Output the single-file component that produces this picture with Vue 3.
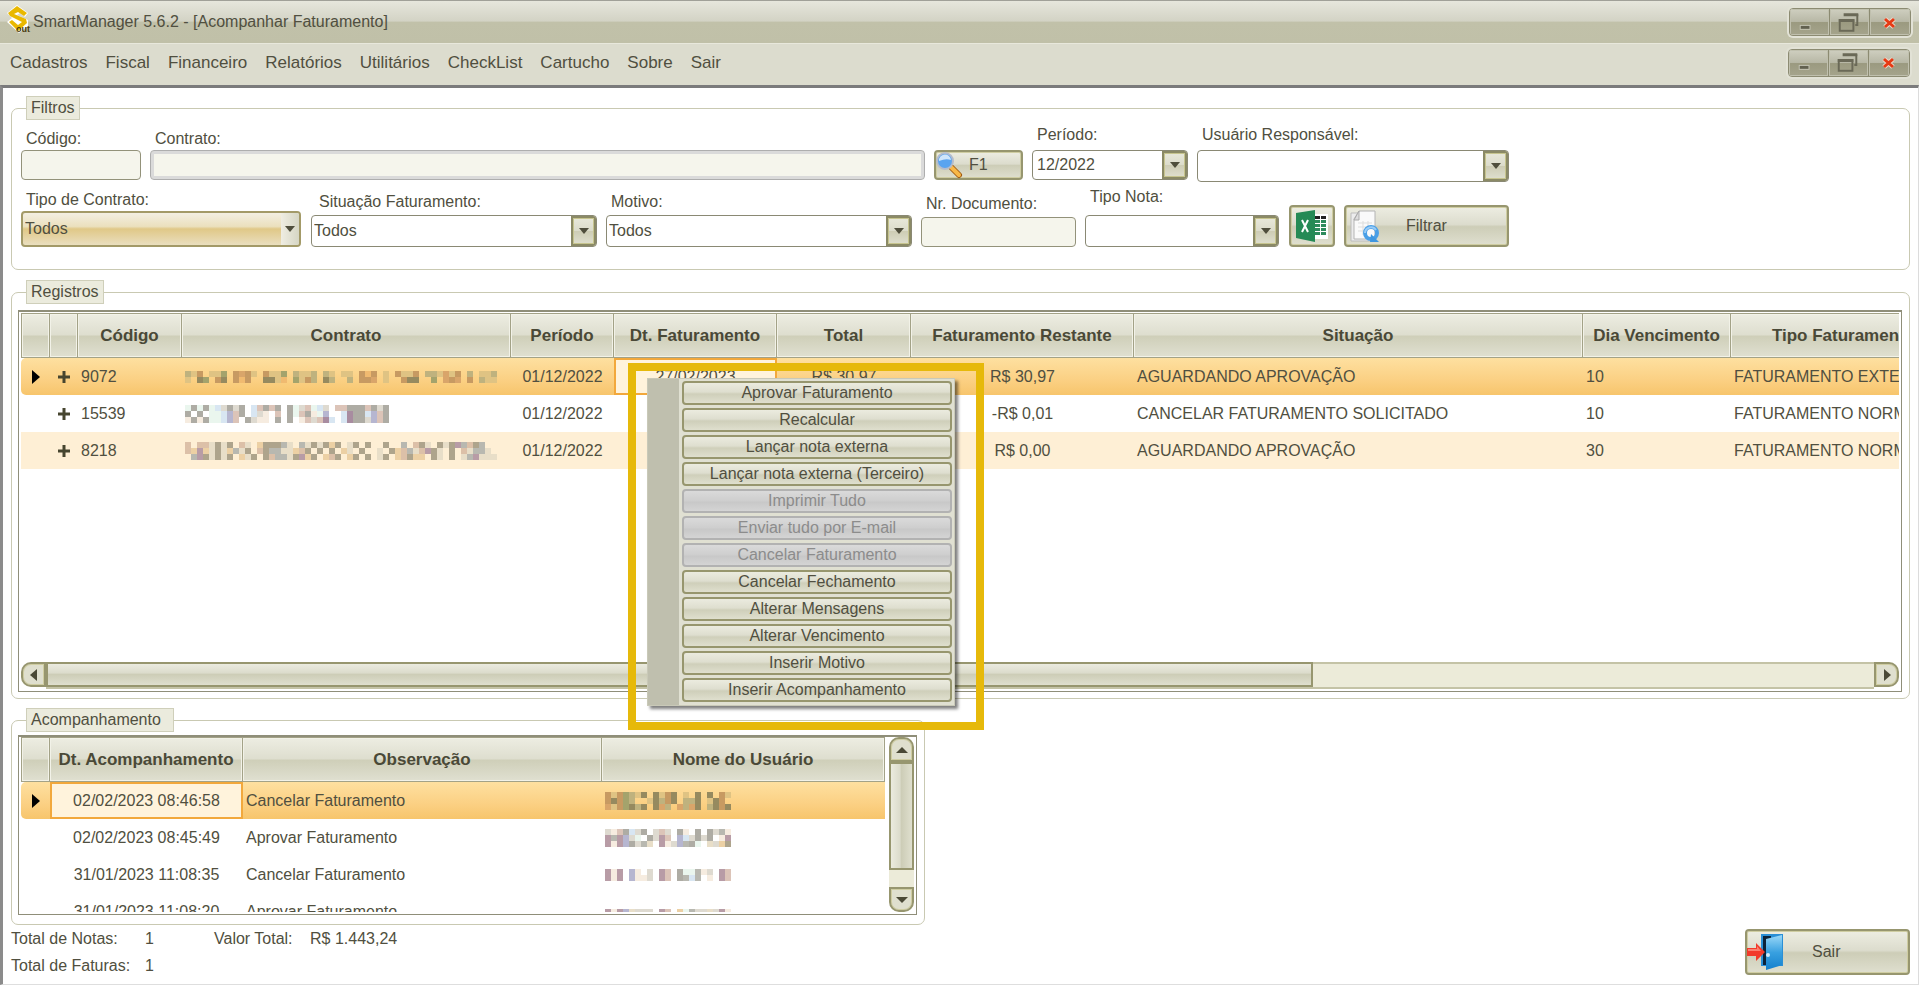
<script setup>
import { h } from 'vue'

const menus = ['Cadastros', 'Fiscal', 'Financeiro', 'Relatórios', 'Utilitários', 'CheckList', 'Cartucho', 'Sobre', 'Sair']

const palette = {
  a: '#bfb27e', b: '#c79a62', c: '#968a5f', d: '#dfc383', e: '#f0ba70', f: '#a4a36c', g: '#d9a56a',
  h: '#aeaca4', i: '#d8e6f2', j: '#eaf6ee', k: '#b6b6d0', l: '#dcc4b8', m: '#f6ece0', n: '#a88ca0', o: '#dedad0',
  p: '#aea48c', q: '#ecd0a4', r: '#dcc0a8', s: '#e8dec8', t: '#b89ca6', u: '#b8b8b0'
}

// Censored values, drawn as rows of coloured 6px blocks.
const Mosaic = (props) => {
  const rows = props.rows
  const w = rows[0].length * 6
  const ht = rows.length * 6
  const cells = []
  rows.forEach((line, y) => {
    line.split('').forEach((c, x) => {
      if (palette[c]) cells.push(h('rect', { x: x * 6, y: y * 6, width: 6, height: 6, fill: palette[c] }))
    })
  })
  return h('svg', { width: w, height: ht, viewBox: `0 0 ${w} ${ht}`, 'shape-rendering': 'crispEdges', 'aria-hidden': 'true' }, cells)
}
Mosaic.props = ['rows']

const WindowButtons = () => h('div', { class: 'winbtns' }, [
  h('button', { type: 'button', 'aria-label': 'Minimizar' }, [
    h('svg', { width: 40, height: 25, viewBox: '0 0 40 25' }, [
      h('rect', { x: 10, y: 15, width: 11, height: 5, fill: '#c4c4b4' }),
      h('rect', { x: 11, y: 16, width: 9, height: 3, fill: '#626150' })
    ])
  ]),
  h('button', { type: 'button', 'aria-label': 'Restaurar' }, [
    h('svg', { width: 40, height: 25, viewBox: '0 0 40 25', fill: 'none', stroke: '#6a6957' }, [
      h('path', { d: 'M28 4v11h-2', 'stroke-width': 2 }),
      h('path', { d: 'M14 4.500h15', 'stroke-width': 3 }),
      h('rect', { x: 10, y: 10, width: 14, height: 11, 'stroke-width': 2 }),
      h('path', { d: 'M9 10.500h16', 'stroke-width': 3 })
    ])
  ]),
  h('button', { type: 'button', 'aria-label': 'Fechar' }, [
    h('svg', { width: 40, height: 25, viewBox: '0 0 40 25' }, [
      h('path', { d: 'M15 9l9 8M24 9l-9 8', stroke: '#e8d4c6', 'stroke-width': 5 }),
      h('path', { d: 'M15 9l9 8M24 9l-9 8', stroke: '#e63a14', 'stroke-width': 3 })
    ])
  ])
])

const columns = [
  { t: '', w: 29 }, { t: '', w: 28 }, { t: 'Código', w: 104 }, { t: 'Contrato', w: 329 },
  { t: 'Período', w: 103 }, { t: 'Dt. Faturamento', w: 163 }, { t: 'Total', w: 134 },
  { t: 'Faturamento Restante', w: 223 }, { t: 'Situação', w: 449 }, { t: 'Dia Vencimento', w: 148 },
  { t: 'Tipo Faturamento', w: 226 }
]
const records = [
  {
    code: '9072', period: '01/12/2022', date: '27/02/2023', total: 'R$ 30,97', rest: 'R$ 30,97',
    status: 'AGUARDANDO APROVAÇÃO', day: '10', type: 'FATURAMENTO EXTERNO',
    mosaic: [
      'adb.ddf.bgbd.bddf.adda.ad.dd.beb.d.bddb.aadgdb.a.dda',
      'd.cf.bc.beb..ccde.fdba.ca..a.bbg.d..bcc..f.gbg.b.add'
    ]
  },
  {
    code: '15539', period: '01/12/2022', date: '', total: '', rest: '-R$ 0,01',
    status: 'CANCELAR FATURAMENTO SOLICITADO', day: '10', type: 'FATURAMENTO NORMAL',
    mosaic: [
      'jhjhjiohoh.ilhlh.hjoljio.llhhhlhoh',
      'h.h.jjiklh.iom.l.hjlhmjk..inhhiklh',
      'mhmhjjikl.homm.h.h.mlolni.inhhoklh'
    ]
  },
  {
    code: '8218', period: '01/12/2022', date: '', total: '', rest: 'R$ 0,00',
    status: 'AGUARDANDO APROVAÇÃO', day: '30', type: 'FATURAMENTO NORMAL',
    mosaic: [
      'r.rrspsp.rs.qpppus.uspspqp.sp.p..p..u.rps.pspturpu..',
      'rqtqspsqusp.rpuussqrp.p.p.qs.p..s.pqrusrtps.p.rsuus.',
      '.utpspsp.qsp.pruusptqp.qrp.qp.p.sp.qrpqq.ps.p.sutsss'
    ]
  }
]

const history = [
  { date: '02/02/2023 08:46:58', note: 'Cancelar Faturamento', mosaic: ['bdbfadc.cdbc.d.c.c.bd', 'bcbfa..dcabc.aac.dcb.', 'gdbfcac.cga.gagc.acbc'] },
  { date: '02/02/2023 08:45:49', note: 'Aprovar Faturamento', mosaic: ['omlhioh.olo.hm.h.houm', 'tutkoj.hotl.kiohoh.mt', 'tmtkhous.tmokuhj.soqp'] },
  { date: '31/01/2023 11:08:35', note: 'Cancelar Faturamento', mosaic: ['tmt.km.o.tl.hjjumo.tl', 'tmt.kmmo.tl.huiu.m.tl'] },
  { date: '31/01/2023 11:08:20', note: 'Aprovar Faturamento', mosaic: ['tmtksooo.tl.qjuoosotm'] }
]

const actions = [
  { t: 'Aprovar Faturamento' }, { t: 'Recalcular' }, { t: 'Lançar nota externa' }, { t: 'Lançar nota externa (Terceiro)' },
  { t: 'Imprimir Tudo', off: true }, { t: 'Enviar tudo por E-mail', off: true }, { t: 'Cancelar Faturamento', off: true },
  { t: 'Cancelar Fechamento' }, { t: 'Alterar Mensagens' }, { t: 'Alterar Vencimento' }, { t: 'Inserir Motivo' },
  { t: 'Inserir Acompanhamento' }
]
</script>

<template>
  <div class="app">
    <header class="titlebar">
      <svg class="logo" width="24" height="28" viewBox="0 0 24 28" aria-hidden="true">
        <path d="M0 8L10 0l11 8-3 4-5-4-3 2 11 5v6l-9 7L0 17l5-4z" fill="#fff" />
        <path d="M1 8l9-7 10 7-3 3-6-4-4 2 12 5 1 4-9 8-9-9 3-2 6 5 4-3L3 11z" fill="#e9b800" />
        <text x="9" y="27" class="logo-text">out</text>
      </svg>
      <span class="title">SmartManager 5.6.2 - [Acompanhar Faturamento]</span>
      <WindowButtons />
    </header>
    <nav class="menubar">
      <a v-for="m in menus" :key="m" href="#">{{ m }}</a>
      <WindowButtons />
    </nav>

    <main class="content">
      <fieldset class="group filters">
        <legend class="caption">Filtros</legend>
        <div class="row first">
          <div class="field code low">
            <label for="codigo">Código:</label>
            <input id="codigo" type="text">
          </div>
          <div class="field contract low">
            <label for="contrato">Contrato:</label>
            <input id="contrato" class="thick" type="text" disabled>
          </div>
          <button type="button" class="btn find">
            <svg width="28" height="28" viewBox="0 0 28 28" aria-hidden="true">
              <path d="M15 16l8 8" stroke="#a05a10" stroke-width="6" stroke-linecap="round" />
              <path d="M15 16l8 8" stroke="#f8b848" stroke-width="4" stroke-linecap="round" />
              <circle cx="9" cy="10" r="8" fill="#5aa4f0" stroke="#b4bccc" stroke-width="2" />
              <path d="M3 10a6 6 0 0 1 12-1q-5-2-12 1z" fill="#cfe6fb" />
            </svg>
            <span>F1</span>
          </button>
          <div class="field period">
            <label for="periodo">Período:</label>
            <span class="combo short"><select id="periodo"><option>12/2022</option></select><i class="arrow"></i></span>
          </div>
          <div class="field user">
            <label for="usuario">Usuário Responsável:</label>
            <span class="combo"><select id="usuario"><option></option></select><i class="arrow"></i></span>
          </div>
        </div>
        <div class="row second">
          <div class="field kind">
            <label for="tipo">Tipo de Contrato:</label>
            <span class="combo hot"><select id="tipo"><option>Todos</option></select><i class="arrow"></i></span>
          </div>
          <div class="field status">
            <label for="situacao">Situação Faturamento:</label>
            <span class="combo"><select id="situacao"><option>Todos</option></select><i class="arrow"></i></span>
          </div>
          <div class="field reason">
            <label for="motivo">Motivo:</label>
            <span class="combo"><select id="motivo"><option>Todos</option></select><i class="arrow"></i></span>
          </div>
          <div class="field doc">
            <label for="documento">Nr. Documento:</label>
            <input id="documento" type="text">
          </div>
          <div class="field note">
            <label for="nota">Tipo Nota:</label>
            <span class="combo"><select id="nota"><option></option></select><i class="arrow"></i></span>
          </div>
          <button type="button" class="btn excel" aria-label="Exportar para Excel">
            <svg width="34" height="34" viewBox="0 0 34 34" aria-hidden="true">
              <rect x="15" y="5" width="18" height="25" fill="#fff" />
              <g fill="#222"><rect x="20" y="7" width="5" height="3" /><rect x="26" y="7" width="5" height="3" /></g>
              <g fill="#2e8b5c">
                <rect x="20" y="11" width="5" height="3" /><rect x="26" y="11" width="5" height="3" />
                <rect x="20" y="15" width="5" height="3" /><rect x="26" y="15" width="5" height="3" />
                <rect x="20" y="19" width="5" height="3" /><rect x="26" y="19" width="5" height="3" />
                <rect x="20" y="23" width="5" height="3" /><rect x="26" y="23" width="5" height="3" />
              </g>
              <path d="M1 4L20 1v32L1 29z" fill="#258a55" />
              <path d="M7 11l6 12M13 11L7 23" stroke="#fff" stroke-width="2" fill="none" />
            </svg>
          </button>
          <button type="button" class="btn filter">
            <svg width="32" height="34" viewBox="0 0 32 34" aria-hidden="true">
              <path d="M2 4h20v28H2z" fill="#ececec" stroke="#bcbcbc" />
              <path d="M10 2h16v28H5V10z" fill="#fafafa" stroke="#b4b4b4" />
              <path d="M10 2v9H5z" fill="#ddd" stroke="#aaa" />
              <path d="M9 14h14M9 18h14M9 22h9M14 12v14M19 12v8" stroke="#ddd" />
              <circle cx="22" cy="24" r="6" fill="none" stroke="#4a9fe6" stroke-width="4" />
              <path d="M22 25l8 8h-9z" fill="#3f97e0" />
              <path d="M16 24a6 6 0 0 1 11-3" fill="none" stroke="#9accf6" stroke-width="2" />
            </svg>
            <span>Filtrar</span>
          </button>
        </div>
      </fieldset>

      <section class="group records">
        <h2 class="caption">Registros</h2>
        <div class="grid">
          <div class="scroller">
            <table class="wide">
              <colgroup><col v-for="(c, i) in columns" :key="i" :style="{ width: c.w + 'px' }"></colgroup>
              <thead>
                <tr><th v-for="(c, i) in columns" :key="i" scope="col">{{ c.t }}</th></tr>
              </thead>
              <tbody>
                <tr v-for="(r, i) in records" :key="i" :class="{ selected: i === 0, alt: i === 2 }">
                  <td class="mid"><svg v-if="i === 0" class="mark" width="8" height="14" viewBox="0 0 8 14" aria-hidden="true"><path d="M0 0l8 7-8 7z" /></svg></td>
                  <td class="mid"><svg class="plus" width="12" height="12" viewBox="0 0 12 12" aria-hidden="true"><path d="M6 0v12M0 6h12" stroke="#46452f" stroke-width="3" /></svg></td>
                  <td>{{ r.code }}</td>
                  <td><Mosaic :rows="r.mosaic" /></td>
                  <td class="mid">{{ r.period }}</td>
                  <td class="mid" :class="{ focus: i === 0 }">{{ r.date }}</td>
                  <td class="mid">{{ r.total }}</td>
                  <td class="mid">{{ r.rest }}</td>
                  <td>{{ r.status }}</td>
                  <td>{{ r.day }}</td>
                  <td>{{ r.type }}</td>
                </tr>
              </tbody>
            </table>
          </div>
          <div class="hbar">
            <button type="button" class="end left" aria-label="Rolar para a esquerda"><svg width="8" height="12" viewBox="0 0 8 12"><path d="M7 0v12L0 6z" /></svg></button>
            <div class="track"><div class="thumb"></div></div>
            <button type="button" class="end right" aria-label="Rolar para a direita"><svg width="8" height="12" viewBox="0 0 8 12"><path d="M1 0v12l7-6z" /></svg></button>
          </div>
        </div>
      </section>

      <section class="group tracking">
        <h2 class="caption roomy">Acompanhamento</h2>
        <div class="grid side">
          <div class="scroller">
            <table class="narrow">
              <colgroup><col class="c0"><col class="c1"><col class="c2"><col class="c3"></colgroup>
              <thead>
                <tr><th scope="col"></th><th scope="col">Dt. Acompanhamento</th><th scope="col">Observação</th><th scope="col">Nome do Usuário</th></tr>
              </thead>
              <tbody>
                <tr v-for="(r, i) in history" :key="i" :class="{ selected: i === 0 }">
                  <td class="mid"><svg v-if="i === 0" class="mark" width="8" height="14" viewBox="0 0 8 14" aria-hidden="true"><path d="M0 0l8 7-8 7z" /></svg></td>
                  <td class="mid" :class="{ focus: i === 0 }">{{ r.date }}</td>
                  <td>{{ r.note }}</td>
                  <td><Mosaic :rows="r.mosaic" /></td>
                </tr>
              </tbody>
            </table>
          </div>
          <div class="vbar">
            <button type="button" class="end up" aria-label="Rolar para cima"><svg width="12" height="8" viewBox="0 0 12 8"><path d="M0 7h12L6 1z" /></svg></button>
            <div class="track"><div class="thumb"></div></div>
            <button type="button" class="end down" aria-label="Rolar para baixo"><svg width="12" height="8" viewBox="0 0 12 8"><path d="M0 1h12L6 7z" /></svg></button>
          </div>
        </div>
      </section>

      <footer class="footer">
        <div class="totals">
          <span>Total de Notas:</span><span>1</span><span>Valor Total:</span><span>R$ 1.443,24</span>
          <span>Total de Faturas:</span><span>1</span>
        </div>
        <button type="button" class="btn exit">
          <svg width="38" height="38" viewBox="0 0 38 38" aria-hidden="true">
            <defs>
              <linearGradient id="door" x1="0" y1="0" x2="0" y2="1"><stop offset="0" stop-color="#9ad8f8" /><stop offset=".5" stop-color="#38a0e0" /><stop offset="1" stop-color="#1480cc" /></linearGradient>
            </defs>
            <path d="M14 1h22v32H14z" fill="#2a8fd6" />
            <path d="M16 3h8v29h-8z" fill="#0c2238" />
            <path d="M19 6l16-4v30l-16 5z" fill="url(#door)" />
            <path d="M0 15h9v-5l9 9-9 9v-5H0z" fill="#f23a2a" />
            <path d="M1 16h9v-3l4 5H1z" fill="#fa8070" />
            <circle cx="21" cy="22" r="2" fill="#cfeafa" />
          </svg>
          <span>Sair</span>
        </button>
      </footer>
    </main>

    <div class="popup">
      <div class="gutter"></div>
      <div class="actions">
        <button v-for="(a, i) in actions" :key="i" type="button" :disabled="a.off">{{ a.t }}</button>
      </div>
    </div>
    <div class="highlight"></div>
  </div>
</template>

<style>
body {
  background: #fff;
}
.winbtns {
  display: flex;
  margin-left: auto;
  height: 28px;
  box-sizing: border-box;
  border: 1px solid #8c8b72;
  border-radius: 4px;
  overflow: hidden;
  box-shadow: 0 0 0 2px #e2e2d6;
}
.winbtns button {
  display: flex;
  align-items: center;
  justify-content: center;
  width: 40px;
  padding: 0;
  border: 0;
  border-right: 1px solid #8c8b72;
  background: linear-gradient(#cfcfc0, #b8b8a6 48%, #9b9a80 52%, #a5a48c);
  box-shadow: inset 0 0 0 1px #c0c0ae;
}
.winbtns button:last-child {
  border-right: 0;
}
</style>

<style scoped>
.app {
  position: relative;
  display: flex;
  flex-direction: column;
  min-height: 100vh;
  box-sizing: border-box;
  padding-bottom: 1px;
  font: 16px/20px "Liberation Sans", Arial, sans-serif;
  color: #504f40;
  background: #fff;
}
button, input, select {
  font: inherit;
  color: inherit;
  box-sizing: border-box;
}
.titlebar {
  display: flex;
  align-items: center;
  height: 43px;
  box-sizing: border-box;
  border-top: 1px solid #a0a098;
  padding: 0 8px 0 7px;
  background: linear-gradient(#e6e6dc, #d3d3c5 48%, #c1c1a9 50%, #c0c0a8);
}
.logo {
  margin-right: 2px;
  margin-bottom: 6px;
}
.logo-text {
  font: bold 9px "Liberation Sans", sans-serif;
  fill: #4a3c10;
}
.title {
  font-size: 16px;
}
.menubar {
  display: flex;
  align-items: center;
  gap: 18px;
  height: 42px;
  box-sizing: border-box;
  border-top: 1px solid #e8e8dc;
  padding: 0 9px 4px 10px;
  background: #dcdcce;
  font-size: 17px;
}
.menubar a {
  color: inherit;
  text-decoration: none;
}
.content {
  flex: 1;
  display: flex;
  flex-direction: column;
  border-top: 3px solid #7b7b7c;
  border-left: 3px solid #8b8b8b;
  border-right: 1px solid #dcdcdc;
  border-bottom: 1px solid #dedede;
  padding: 8px 8px 1px 8px;
}
.group {
  min-width: 0;
  margin: 0;
  box-sizing: border-box;
  border: 1px solid #c9c9b2;
  border-radius: 7px;
}
.filters {
  padding: 5px 8px 22px 9px;
}
.caption {
  margin: 0;
  padding: 1px 4px;
  border: 1px solid #cfcfba;
  background: #ebebdd;
  font-size: 16px;
  font-weight: normal;
}
legend.caption {
  margin-left: 5px;
}
h2.caption {
  align-self: flex-start;
  margin: -13px 0 6px 8px;
}
h2.roomy {
  margin-bottom: 3px;
  padding-right: 12px;
}
.row {
  display: flex;
}
.first {
  align-items: flex-start;
  margin-bottom: 5px;
}
.second {
  align-items: flex-end;
}
.field {
  display: flex;
  flex-direction: column;
  gap: 3px;
  margin-right: 9px;
}
.first .field {
  gap: 5px;
}
.first .low {
  padding-top: 4px;
  gap: 1px;
}
.field label {
  padding-left: 5px;
}
.status label {
  padding-left: 8px;
}
.code { width: 120px; }
.contract { width: 775px; }
.period { width: 156px; }
.user { width: 312px; }
.field.kind { width: 280px; gap: 1px; margin-right: 10px; }
.status { width: 286px; }
.reason { width: 306px; }
.doc { width: 155px; }
.field.note { width: 194px; gap: 8px; margin-right: 10px; }
input {
  height: 30px;
  width: 100%;
  border: 1px solid #93927a;
  border-radius: 4px;
  background: #f5f5ec;
}
.thick {
  border-color: #aeaeae;
  box-shadow: inset 0 0 0 3px #dadada;
}
.combo {
  display: grid;
  grid-template-columns: 1fr 25px;
  height: 32px;
  box-sizing: border-box;
  border: 1px solid #8a8974;
  border-radius: 4px;
  overflow: hidden;
  background: #fff;
}
.short {
  height: 30px;
}
.combo select {
  grid-area: 1 / 1 / 2 / 3;
  appearance: none;
  width: 100%;
  padding: 0 28px 0 2px;
  border: 0;
  background: transparent;
}
.short select {
  padding-left: 4px;
}
.arrow {
  grid-area: 1 / 2 / 2 / 3;
  display: flex;
  align-items: center;
  justify-content: center;
  pointer-events: none;
  border: 2px solid #8b8a66;
  box-shadow: inset 0 0 0 1px #c6c48e;
  background: linear-gradient(#e8e8da, #dcdccb 48%, #cdccb4 50%, #dfdfce);
}
.arrow::after {
  content: "";
  border: 5px solid transparent;
  border-top: 6px solid #4f4e3c;
  border-bottom: 0;
}
.hot {
  grid-template-columns: 1fr 18px;
  height: 36px;
  border: 2px solid #a39a68;
  background: linear-gradient(#f3efe2, #ebe0bd 42%, #e0c887 50%, #eadfbf);
}
.hot .arrow {
  border: 0;
  box-shadow: none;
  background: linear-gradient(90deg, #efede2, #d6d6c4);
}
.btn {
  display: flex;
  align-items: center;
  padding: 0;
  border: 2px solid #97966f;
  border-radius: 4px;
  box-shadow: inset 0 0 0 1px #cfcda2;
  background: linear-gradient(#edede2, #dcdccd 46%, #cdcdb7 52%, #dfdfcf);
}
.find {
  width: 89px;
  height: 30px;
  margin: 25px 9px 0 0;
  gap: 5px;
}
.excel {
  width: 46px;
  height: 42px;
  justify-content: center;
  margin-right: 9px;
}
.filter {
  width: 165px;
  height: 42px;
  padding-left: 3px;
  gap: 25px;
}
.records {
  flex: 1;
  display: flex;
  flex-direction: column;
  margin-top: 22px;
  padding: 0 7px 6px 6px;
}
.grid {
  flex: 1;
  display: flex;
  flex-direction: column;
  min-width: 0;
  box-sizing: border-box;
  border: 1px solid #8f8e79;
  border-top-width: 2px;
  padding: 1px 2px 2px 2px;
}
.side {
  flex: none;
  flex-direction: row;
  height: 180px;
  gap: 4px;
  padding: 0 2px 2px;
}
.scroller {
  flex: 1;
  overflow: hidden;
}
table {
  table-layout: fixed;
  border-collapse: separate;
  border-spacing: 0;
}
.wide { width: 1936px; }
.narrow { width: 100%; }
.c0 { width: 29px; }
.c1 { width: 193px; }
.c2 { width: 359px; }
th {
  height: 45px;
  box-sizing: border-box;
  padding: 0;
  border: 1px solid #a3a287;
  border-left-width: 0;
  font-size: 17px;
  font-weight: bold;
  white-space: nowrap;
  color: #4a4937;
  box-shadow: inset 0 0 0 1px #f2f2e8;
  background: linear-gradient(#edede2, #dedecf 48%, #cfcfb9 52%, #e0e0d1);
}
th:first-child {
  border-left-width: 1px;
}
td {
  height: 37px;
  padding: 0 3px;
  box-sizing: border-box;
  white-space: nowrap;
  overflow: hidden;
}
td svg {
  display: block;
}
.mid {
  text-align: center;
}
.mark, .plus {
  margin: 0 auto;
}
.selected td {
  background: linear-gradient(#fee0a0, #fbd083 60%, #f7c56c);
}
.selected td:first-child {
  border-radius: 5px 0 0 5px;
}
.selected td.focus {
  border: 2px solid #f2a83c;
  background: #fff3dc;
}
.alt td {
  background: #feefd5;
}
.hbar, .vbar {
  display: flex;
}
.vbar {
  flex-direction: column;
}
.end {
  display: flex;
  align-items: center;
  justify-content: center;
  flex: none;
  width: 25px;
  height: 25px;
  padding: 0;
  border: 2px solid #97966f;
  box-shadow: inset 0 0 0 1px #cfcda2;
  background: #dfdfce;
  fill: #4a4936;
}
.left { border-radius: 10px 0 0 10px; }
.right { border-radius: 0 10px 10px 0; }
.up { border-radius: 10px 10px 0 0; }
.down { border-radius: 0 0 10px 10px; }
.track {
  flex: 1;
  box-sizing: border-box;
  background: #ecebd9;
}
.hbar .track {
  border-top: 2px solid #c4c3a6;
  border-bottom: 2px solid #c4c3a6;
}
.thumb {
  box-sizing: border-box;
  border: 2px solid #97966f;
}
.hbar .thumb {
  width: 69.3%;
  height: 25px;
  margin-top: -2px;
  background: linear-gradient(#ebebdf, #dcdccc 42%, #cdcdb7 50%, #dfdfce);
}
.vbar .thumb {
  height: 108px;
  background: linear-gradient(90deg, #ebebdf, #dcdccc 42%, #cdcdb7 50%, #dfdfce);
}
.tracking {
  display: flex;
  flex-direction: column;
  width: 914px;
  margin: 21px 0 4px;
  padding: 0 7px 9px 6px;
}
.footer {
  display: flex;
  align-items: flex-start;
  justify-content: space-between;
}
.totals {
  display: grid;
  grid-template-columns: 134px 69px 96px 120px;
  grid-auto-rows: 27px;
}
.exit {
  width: 165px;
  height: 46px;
  gap: 27px;
}
.popup {
  position: absolute;
  left: 647px;
  top: 378px;
  display: flex;
  width: 308px;
  box-sizing: border-box;
  border: 1px solid #c9c9b8;
  background: #e0e0d2;
  box-shadow: 3px 3px 3px rgba(0, 0, 0, .5);
}
.gutter {
  width: 31px;
  background: #bfbfae;
}
.actions {
  flex: 1;
  display: flex;
  flex-direction: column;
  gap: 3px;
  padding: 2px 2px 3px 3px;
}
.actions button {
  height: 24px;
  padding: 0;
  border: 2px solid #97966e;
  border-radius: 4px;
  line-height: 18px;
  background: linear-gradient(#ebebdf, #dedecf 45%, #cfcfba 55%, #dfdfce);
}
.actions button:disabled {
  border-color: #b2b2b2;
  color: #8c8c8c;
  background: linear-gradient(#dadada, #cecece 50%, #c8c8c8 55%, #d4d4d4);
}
.highlight {
  position: absolute;
  left: 628px;
  top: 363px;
  width: 356px;
  height: 367px;
  box-sizing: border-box;
  border: 8px solid #e6b90a;
  pointer-events: none;
}
</style>
